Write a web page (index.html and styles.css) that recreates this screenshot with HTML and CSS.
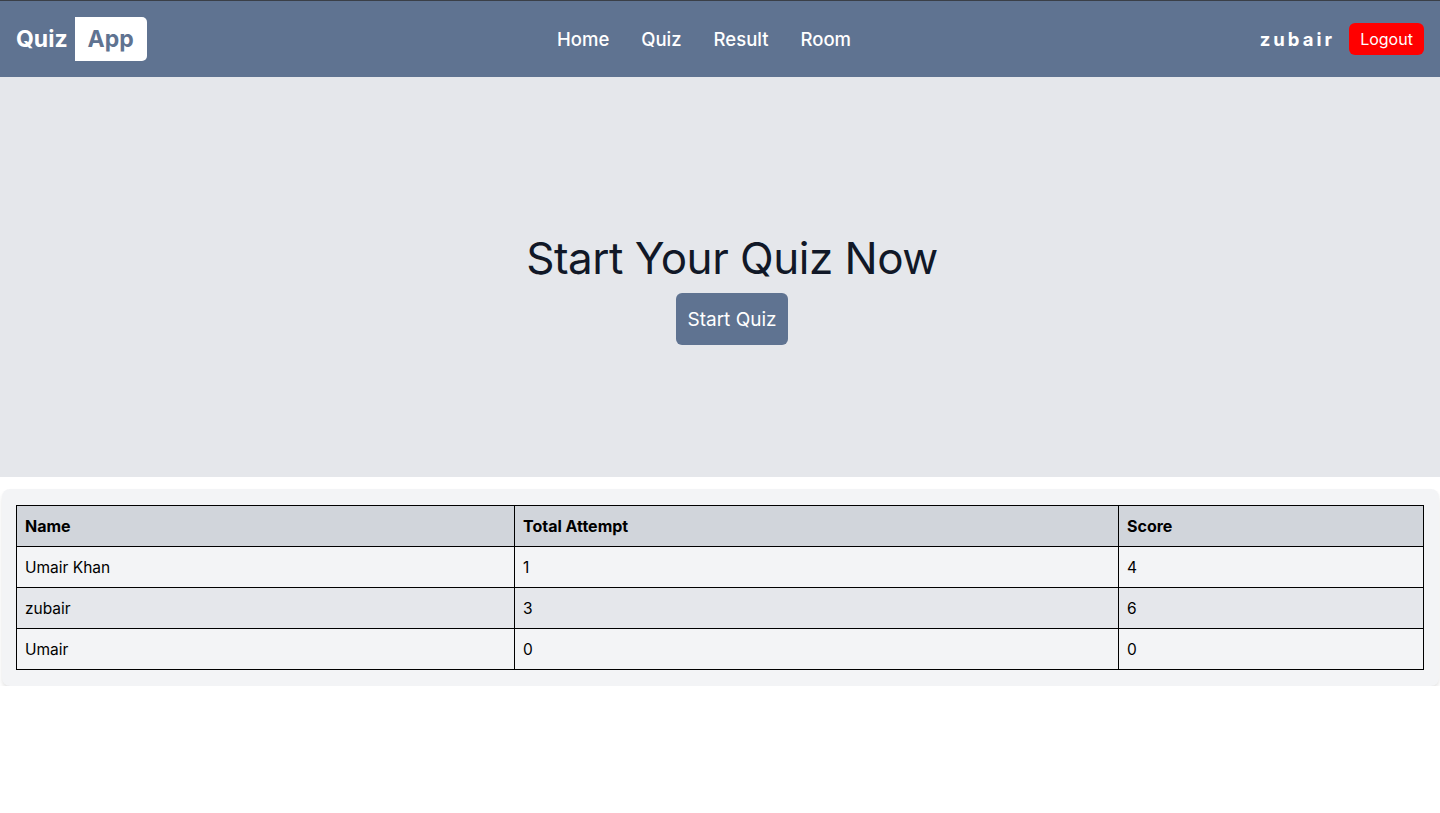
FILE: index.html
```html
<!DOCTYPE html>
<html lang="en">
<head>
<meta charset="utf-8">
<title>Quiz App</title>
<link rel="stylesheet" href="styles.css">
</head>
<body>
<header class="nav">
  <div class="brand"><span class="brand-quiz">Quiz</span><span class="brand-app">App</span></div>
  <nav class="links">
    <a href="#">Home</a>
    <a href="#">Quiz</a>
    <a href="#">Result</a>
    <a href="#">Room</a>
  </nav>
  <div class="user">
    <span class="username">zubair</span>
    <button class="logout">Logout</button>
  </div>
</header>
<section class="hero">
  <h1>Start Your Quiz Now</h1>
  <button class="start">Start Quiz</button>
</section>
<section class="card">
  <table class="scores">
    <thead>
      <tr><th class="c1">Name</th><th class="c2">Total Attempt</th><th>Score</th></tr>
    </thead>
    <tbody>
      <tr><td>Umair Khan</td><td>1</td><td>4</td></tr>
      <tr class="alt"><td>zubair</td><td>3</td><td>6</td></tr>
      <tr><td>Umair</td><td>0</td><td>0</td></tr>
    </tbody>
  </table>
</section>
</body>
</html>
```

FILE: styles.css
```css
* { box-sizing: border-box; }
html, body { margin: 0; padding: 0; }
body {
  font-family: Inter, "Noto Sans", "Liberation Sans", sans-serif;
  background: #ffffff;
  color: #000;
}
.nav {
  height: 77px;
  background: #5f7391;
  border-top: 1px solid #3a3f47;
  display: flex;
  align-items: center;
  justify-content: space-between;
  padding: 0 16px;
  position: relative;
}
.brand {
  display: flex;
  align-items: center;
  font-weight: 700;
  font-size: 23px;
  margin-top: -1px;
}
.brand-quiz { color: #fff; margin-right: 7px; }
.brand-app {
  background: #fff;
  color: #5f7391;
  height: 44px;
  width: 72px;
  display: flex;
  align-items: center;
  justify-content: center;
  border-radius: 0 5px 5px 0;
}
.links {
  position: absolute;
  left: 557px;
  top: 0;
  height: 76px;
  display: flex;
  align-items: center;
  gap: 32px;
}
.links a {
  color: #fff;
  text-decoration: none;
  font-size: 18.5px;
  font-weight: 500;
}
.user { display: flex; align-items: center; gap: 14px; }
.username {
  color: #fff;
  font-weight: 700;
  font-size: 18.5px;
  letter-spacing: 3px;
}
.logout {
  background: #ff0000;
  color: #fff;
  border: none;
  border-radius: 6px;
  font-family: inherit;
  font-size: 16px;
  width: 75px;
  height: 32px;
  padding: 0;
}
.hero {
  height: 400px;
  background: #e5e7eb;
  display: flex;
  flex-direction: column;
  align-items: center;
  justify-content: center;
  padding: 21px 0 0 24px;
}
.hero h1 {
  margin: 0;
  font-size: 44px;
  font-weight: 400;
  color: #111827;
  line-height: 56px;
  letter-spacing: -0.5px;
}
.start {
  margin-top: 7px;
  background: #5f7391;
  color: #fff;
  border: none;
  border-radius: 6px;
  font-family: inherit;
  font-size: 19px;
  width: 112px;
  height: 52px;
  padding: 0;
}
.card {
  margin: 12px 1px 0 2px;
  background: #f3f4f6;
  border-radius: 8px;
  box-shadow: 0 4px 6px -1px rgba(0,0,0,0.1), 0 2px 4px -1px rgba(0,0,0,0.06);
  padding: 16px 15px 16px 14px;
}
.scores {
  width: 100%;
  border-collapse: collapse;
  font-size: 16px;
}
.scores th, .scores td {
  border: 1px solid #000;
  height: 41px;
  padding: 0 8px;
  text-align: left;
}
.scores th { background: #d1d5db; font-weight: 700; font-size: 16px; }
.scores td { font-size: 15.5px; }
.c1 { width: 498px; }
.c2 { width: 604px; }
.alt td { background: #e5e7eb; }
```
